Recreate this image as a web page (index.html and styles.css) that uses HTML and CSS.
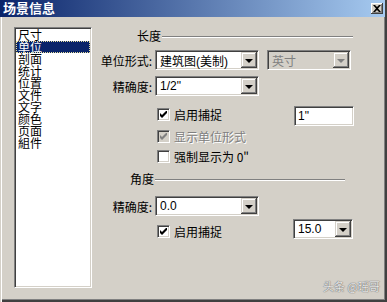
FILE: index.html
```html
<!DOCTYPE html>
<html lang="zh">
<head>
  <meta charset="UTF-8" />
  <title>场景信息</title>
  <link rel="stylesheet" href="styles.css">
</head>
<body>
  <div class="window">
    <div class="titlebar">
      <span class="title">场景信息</span>
      <span class="close-btn">
        <svg width="8" height="7" viewBox="0 0 8 7"><path d="M0 0h2l2 2 2-2h2L5 3.5 8 7H6L4 5 2 7H0l3-3.5z" fill="#000"/></svg>
      </span>
    </div>
    <div class="content">
      <ul class="list">
        <li>尺寸</li>
        <li class="selected">单位</li>
        <li>剖面</li>
        <li>统计</li>
        <li>位置</li>
        <li>文件</li>
        <li>文字</li>
        <li>颜色</li>
        <li>页面</li>
        <li>組件</li>
      </ul>

      <div class="panel">
        <div class="group-head head-length">
          <span>长度</span><i class="rule"></i>
        </div>

        <div class="row row-unit">
          <label class="lbl">单位形式:</label>
          <div class="combo combo-main">
            <span class="combo-text">建筑图(美制)</span>
            <span class="drop-btn"><i class="arrow"></i></span>
          </div>
          <div class="combo combo-inch disabled">
            <span class="combo-text">英寸</span>
            <span class="drop-btn"><i class="arrow"></i></span>
          </div>
        </div>

        <div class="row row-precision">
          <label class="lbl">精确度:</label>
          <div class="combo combo-main">
            <span class="combo-text">1/2"</span>
            <span class="drop-btn"><i class="arrow"></i></span>
          </div>
        </div>

        <div class="row row-check row-snap">
          <span class="check checked"><svg width="7" height="7" viewBox="0 0 7 7"><path d="M0 2v3l2 2 5-5V-1L2 4z" fill="#000"/></svg></span>
          <span class="check-label">启用捕捉</span>
          <div class="textbox">1"</div>
        </div>

        <div class="row row-check">
          <span class="check checked disabled"><svg width="7" height="7" viewBox="0 0 7 7"><path d="M0 2v3l2 2 5-5V-1L2 4z" fill="#808080"/></svg></span>
          <span class="check-label muted">显示单位形式</span>
        </div>

        <div class="row row-check">
          <span class="check"></span>
          <span class="check-label">强制显示为 0"</span>
        </div>

        <div class="group-head head-angle">
          <span>角度</span><i class="rule"></i>
        </div>

        <div class="row row-angle-prec">
          <label class="lbl">精确度:</label>
          <div class="combo combo-main">
            <span class="combo-text">0.0</span>
            <span class="drop-btn"><i class="arrow"></i></span>
          </div>
        </div>

        <div class="row row-check row-angle-snap">
          <span class="check checked"><svg width="7" height="7" viewBox="0 0 7 7"><path d="M0 2v3l2 2 5-5V-1L2 4z" fill="#000"/></svg></span>
          <span class="check-label">启用捕捉</span>
          <div class="combo combo-small">
            <span class="combo-text">15.0</span>
            <span class="drop-btn"><i class="arrow"></i></span>
          </div>
        </div>
      </div>
    </div>
    <div class="watermark">头条 @瑶哥</div>
  </div>
</body>
</html>
```

FILE: styles.css
```css
body {
  margin: 0;
  background: #d4d0c8;
  font-family: "Liberation Sans", "Noto Sans CJK SC", sans-serif;
  font-size: 12px;
  color: #000;
}
.window {
  position: relative;
  width: 387px;
  height: 302px;
  box-sizing: border-box;
  background: #d4d0c8;
  box-shadow: inset 1px 0 #d4d0c8, inset 2px 0 #fff, inset -2px -2px #404040, inset -3px -3px #808080;
  display: flex;
  flex-direction: column;
}
.titlebar {
  height: 17px;
  margin-right: 2px;
  background: linear-gradient(to right, #0a246a, #a6caf0);
  display: flex;
  align-items: center;
  justify-content: space-between;
  padding: 0 2px 0 3px;
}
.title {
  color: #fff;
  font-weight: bold;
  font-size: 13px;
  line-height: 17px;
}
.close-btn {
  width: 12px;
  height: 11px;
  background: #d4d0c8;
  box-shadow: inset -1px -1px #404040, inset 1px 1px #fff, inset -2px -2px #808080;
  display: flex;
  align-items: center;
  justify-content: center;
}
.content {
  flex: 1;
  display: flex;
  padding: 10px 0 0 14px;
}
.list {
  margin: 0;
  padding: 1px 0 0 1px;
  list-style: none;
  width: 78px;
  height: 261px;
  box-sizing: border-box;
  background: #fff;
  border-top: 1px solid #808080;
  border-left: 1px solid #808080;
  border-bottom: 1px solid #fff;
  border-right: 1px solid #fff;
  box-shadow: inset 1px 1px #404040, inset -1px -1px #d4d0c8;
}
.list li {
  height: 12px;
  line-height: 12px;
  padding-left: 2px;
  margin-right: 1px;
  font-family: "Noto Sans CJK SC", sans-serif;
  font-size: 12px;
}
.list li.selected {
  background: #0a246a;
  color: #fff;
  outline: 1px dotted #e8e0a0;
  outline-offset: -1px;
}
.panel {
  flex: 1;
  margin-left: 3px;
  margin-right: 3px;
  display: flex;
  flex-direction: column;
}
.group-head {
  height: 16px;
  display: flex;
  align-items: center;
  font-family: "Noto Sans CJK SC", sans-serif;
}
.group-head .rule {
  flex: 1;
  height: 0;
  margin-top: 4px;
  margin-left: 1px;
  border-top: 1px solid #808080;
  border-bottom: 1px solid #fff;
}
.head-length {
  padding-left: 42px;
  margin-right: 31px;
}
.head-angle {
  margin-top: 4px;
  padding-left: 35px;
  margin-right: 39px;
}
.row {
  display: flex;
  align-items: center;
  height: 20px;
}
.row-unit { margin-top: 7px; }
.row-precision { margin-top: 6px; }
.row-snap { margin-top: 10px; align-items: flex-start; }
.row-snap .check { margin-top: 2px; }
.row-snap .check-label { line-height: 17px; }
.row-angle-prec { margin-top: 10px; }
.row-angle-snap { margin-top: 3px; align-items: flex-start; }
.row-angle-snap .check { margin-top: 6px; }
.row-angle-snap .check-label { line-height: 25px; }
.lbl {
  width: 57px;
  text-align: right;
  margin-right: 3px;
  font-family: "Noto Sans CJK SC", sans-serif;
}
.combo {
  height: 20px;
  box-sizing: border-box;
  background: #fff;
  border-top: 1px solid #808080;
  border-left: 1px solid #808080;
  border-bottom: 1px solid #fff;
  border-right: 1px solid #fff;
  box-shadow: inset 1px 1px #404040, inset -1px -1px #d4d0c8;
  display: flex;
  align-items: center;
  padding: 1px;
}
.combo-main { width: 104px; }
.combo-inch { width: 84px; margin-left: 8px; }
.combo-small { width: 60px; margin-left: auto; margin-right: 31px; }
.combo-text {
  flex: 1;
  padding-left: 3px;
  white-space: nowrap;
  font-family: "Liberation Sans", "Noto Sans CJK SC", sans-serif;
}
.combo.disabled { background: #d4d0c8; }
.combo.disabled .combo-text { color: #808080; }
.drop-btn {
  width: 16px;
  height: 16px;
  background: #d4d0c8;
  box-shadow: inset -1px -1px #404040, inset 1px 1px #d4d0c8, inset -2px -2px #808080, inset 2px 2px #fff;
  display: flex;
  align-items: center;
  justify-content: center;
}
.arrow {
  width: 0;
  height: 0;
  border-left: 4px solid transparent;
  border-right: 4px solid transparent;
  border-top: 4px solid #000;
  margin-top: 1px;
}
.disabled .arrow { border-top-color: #808080; }
.check {
  width: 13px;
  height: 13px;
  box-sizing: border-box;
  margin-left: 62px;
  background: #fff;
  border-top: 1px solid #808080;
  border-left: 1px solid #808080;
  border-bottom: 1px solid #fff;
  border-right: 1px solid #fff;
  box-shadow: inset 1px 1px #404040, inset -1px -1px #d4d0c8;
  display: flex;
  align-items: center;
  justify-content: center;
}
.check.disabled { background: #d4d0c8; }
.check-label {
  margin-left: 4px;
  font-family: "Noto Sans CJK SC", sans-serif;
}
.check-label.muted {
  color: #808080;
  text-shadow: 1px 1px #fff;
}
.textbox {
  margin-left: auto;
  margin-right: 30px;
  width: 60px;
  height: 20px;
  box-sizing: border-box;
  background: #fff;
  border-top: 1px solid #808080;
  border-left: 1px solid #808080;
  border-bottom: 1px solid #fff;
  border-right: 1px solid #fff;
  box-shadow: inset 1px 1px #404040, inset -1px -1px #d4d0c8;
  padding-left: 3px;
  line-height: 18px;
}
.watermark {
  position: absolute;
  right: 7px;
  bottom: 8px;
  font-family: "Noto Sans CJK SC", sans-serif;
  font-size: 11px;
  color: rgba(255, 255, 255, 0.85);
  text-shadow: 0 0 1px #666, 0 0 1px #666;
}
```
